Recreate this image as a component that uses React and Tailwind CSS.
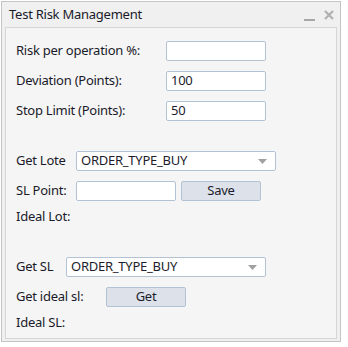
export default function App() {
  const font = { fontFamily: '"Noto Sans", "DejaVu Sans", sans-serif' };
  const inputCls = "h-[20px] bg-white border border-[#b3c3d3] rounded-[2px] text-[13px] px-[4px] flex items-center text-[#1c1c2c]";
  const btnCls = "h-[20px] bg-[#dde2ea] border border-[#b3c3d3] rounded-[2px] text-[13px] flex items-center justify-center text-[#1c1c2c]";
  return (
    <div className="w-[348px] h-[347px] bg-white tracking-[-0.25px]" style={font}>
      <div className="absolute left-[1px] top-[1px] w-[340px] h-[341px] border border-[#c4c4c4] bg-[#f0f0f0] flex flex-col">
        <div className="h-[25px] flex items-center pl-[7px] pr-[6px] text-[13px] text-[#1a1a2a]">
          <span className="flex-1">Test Risk Management</span>
          <svg width="12" height="12" viewBox="0 0 12 12" className="mr-[8px] mt-[4px]">
            <rect x="0" y="8" width="11" height="2" fill="#a8a8a8" />
          </svg>
          <svg width="10" height="10" viewBox="0 0 10 10" className="mr-[0px]">
            <path d="M1 1 L9 9 M9 1 L1 9" stroke="#b0b0b0" strokeWidth="2.2" />
          </svg>
        </div>
        <div className="mx-[3px] h-[312px] border border-[#d6d6d6] bg-[#f5f5f5] text-[13px] text-[#1a1a2a] pl-[10px] pt-[13px]">
          <div className="flex flex-col gap-[10px]">
            <div className="flex items-center h-[20px]">
              <span className="w-[150px]">Risk per operation %:</span>
              <div className={inputCls + " w-[100px]"}></div>
            </div>
            <div className="flex items-center h-[20px]">
              <span className="w-[150px]">Deviation (Points):</span>
              <div className={inputCls + " w-[100px]"}>100</div>
            </div>
            <div className="flex items-center h-[20px]">
              <span className="w-[150px]">Stop Limit (Points):</span>
              <div className={inputCls + " w-[100px]"}>50</div>
            </div>
          </div>
          <div className="flex flex-col mt-[30px]">
            <div className="flex items-center h-[20px]">
              <span className="w-[60px]">Get Lote</span>
              <div className={inputCls + " w-[200px] justify-between"}>
                <span>ORDER_TYPE_BUY</span>
                <svg width="9" height="5" viewBox="0 0 9 5" className="mr-[4px]"><path d="M0 0 L9 0 L4.5 5 Z" fill="#a0a0a0" /></svg>
              </div>
            </div>
            <div className="flex items-center h-[20px] mt-[10px]">
              <span className="w-[60px]">SL Point:</span>
              <div className={inputCls + " w-[100px]"}></div>
              <div className={btnCls + " w-[80px] ml-[5px]"}>Save</div>
            </div>
            <div className="flex items-center h-[20px] mt-[6px]">
              <span>Ideal Lot:</span>
            </div>
          </div>
          <div className="flex flex-col mt-[30px]">
            <div className="flex items-center h-[20px]">
              <span className="w-[50px]">Get SL</span>
              <div className={inputCls + " w-[200px] justify-between"}>
                <span>ORDER_TYPE_BUY</span>
                <svg width="9" height="5" viewBox="0 0 9 5" className="mr-[4px]"><path d="M0 0 L9 0 L4.5 5 Z" fill="#a0a0a0" /></svg>
              </div>
            </div>
            <div className="flex items-center h-[20px] mt-[10px]">
              <span className="w-[90px]">Get ideal sl:</span>
              <div className={btnCls + " w-[80px]"}>Get</div>
            </div>
            <div className="flex items-center h-[20px] mt-[6px]">
              <span>Ideal SL:</span>
            </div>
          </div>
        </div>
      </div>
    </div>
  );
}
